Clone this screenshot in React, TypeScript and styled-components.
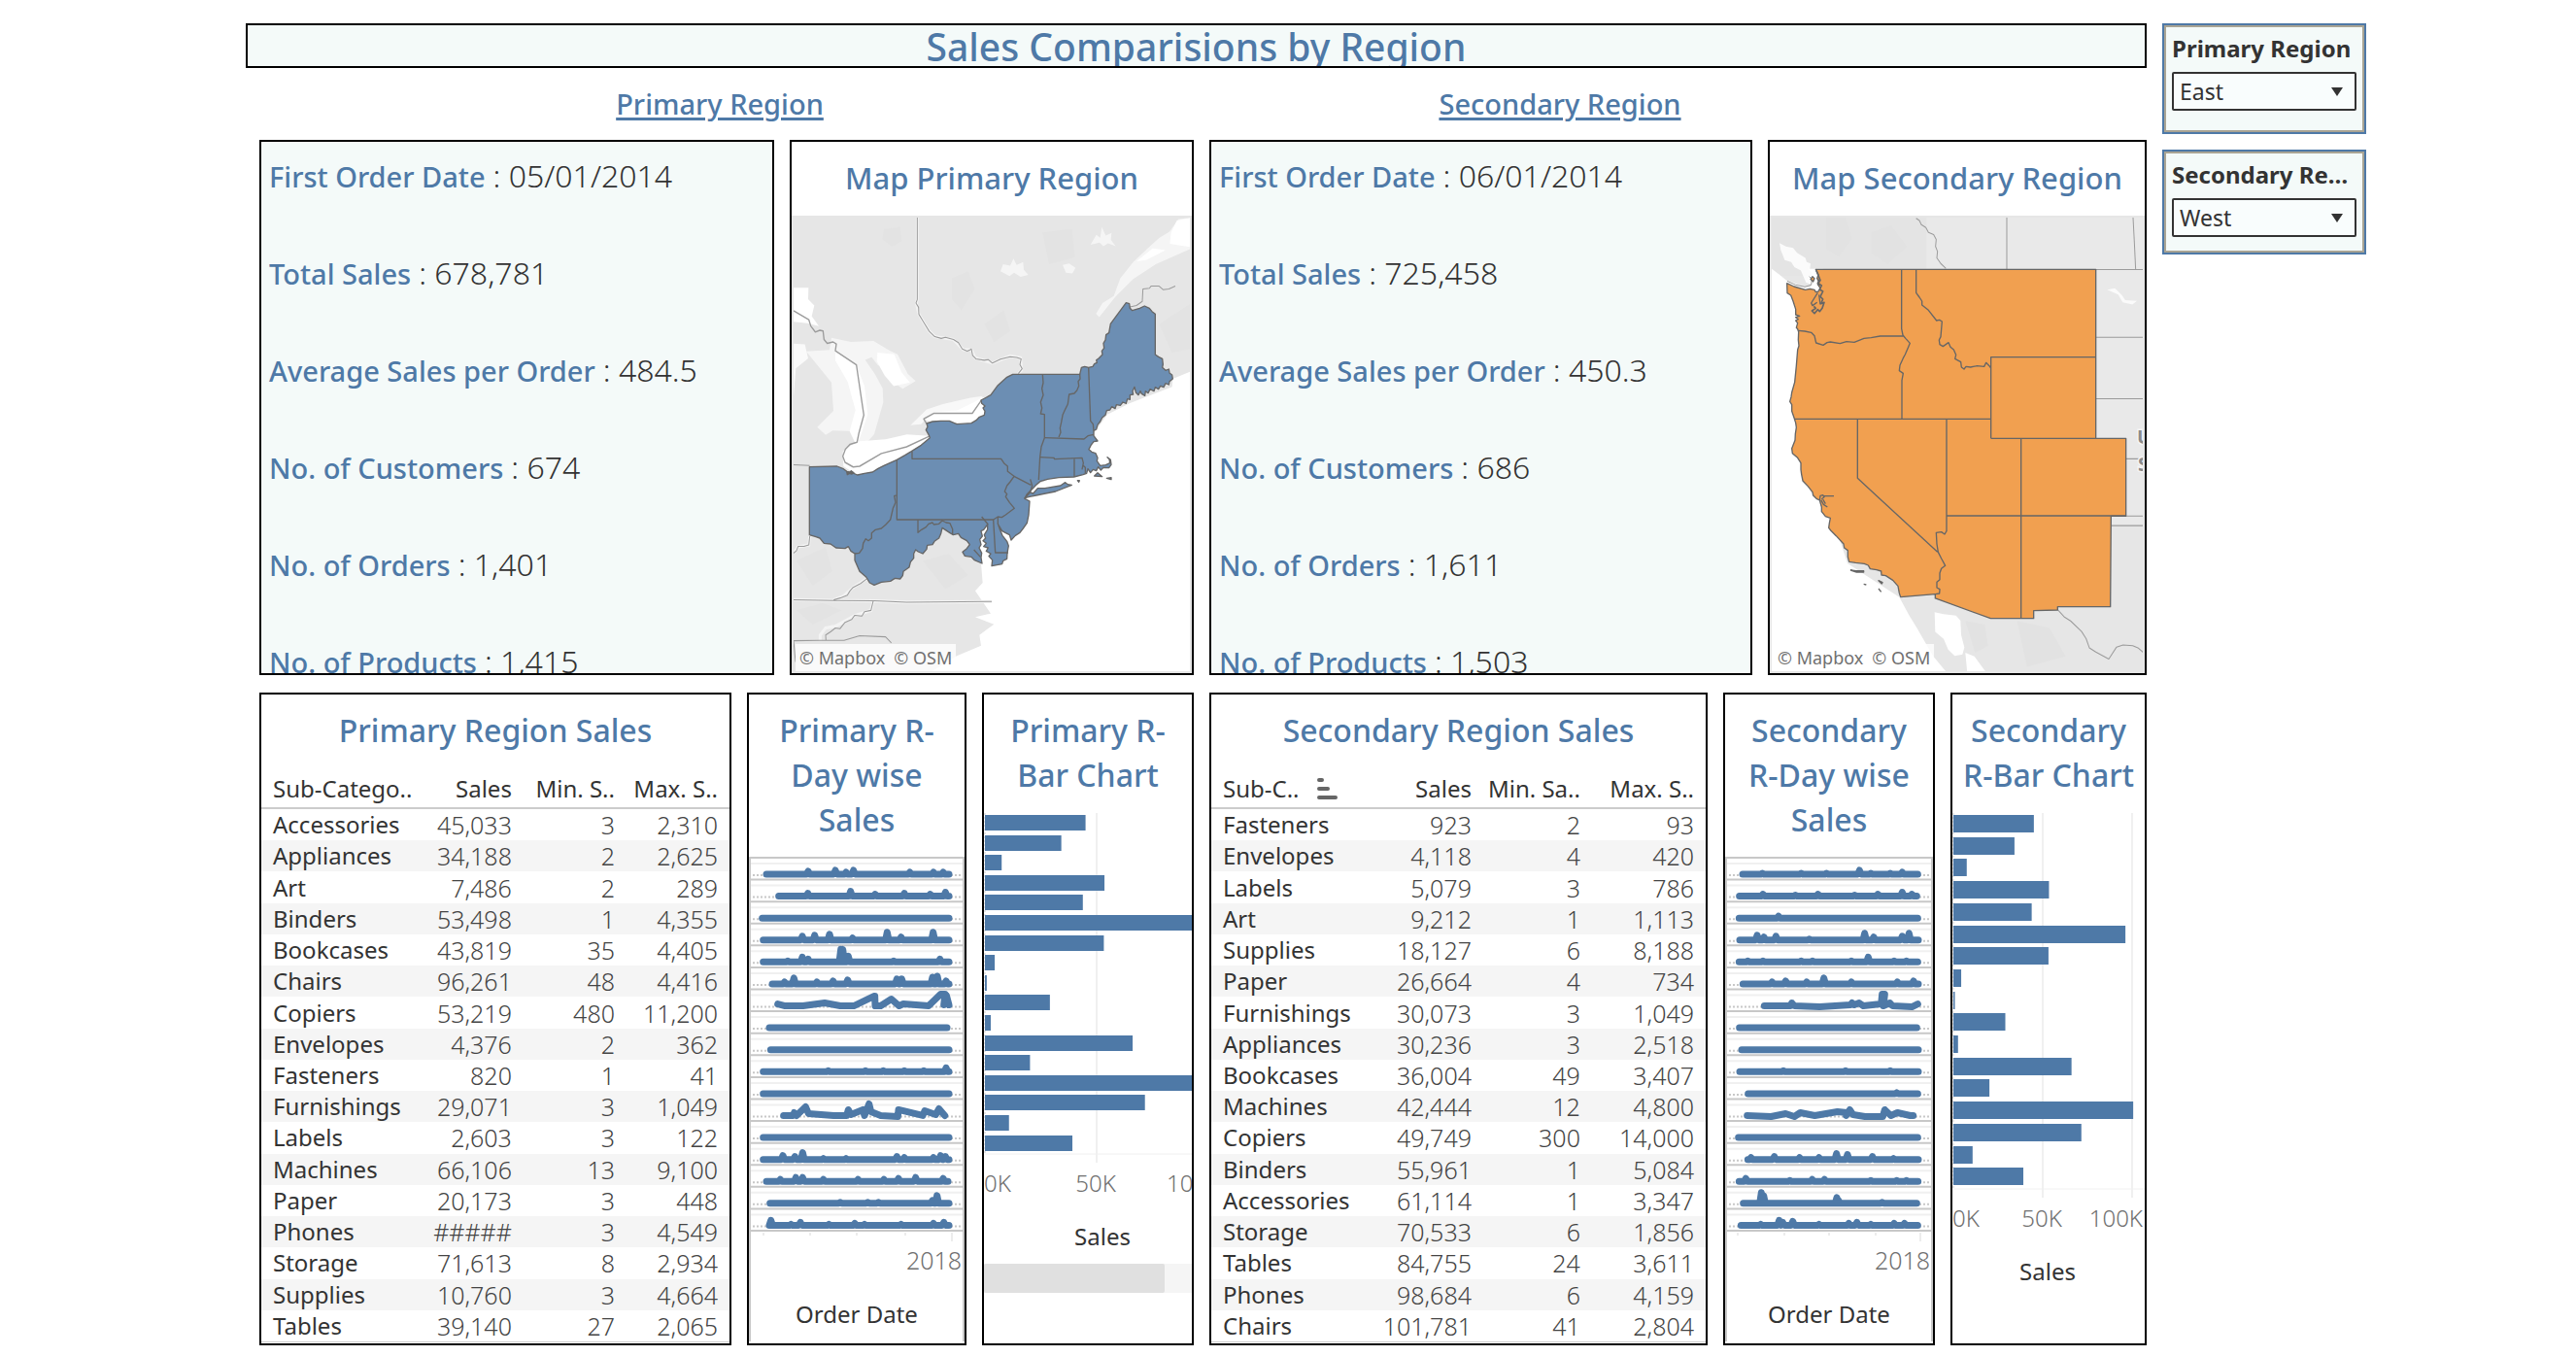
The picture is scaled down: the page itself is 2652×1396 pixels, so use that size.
import React from "react";
import styled, { createGlobalStyle } from "styled-components";

const BLUE = "#4e79a7";
const INK = "#333333";
const TINT = "#f4faf9";

const GlobalStyle = createGlobalStyle`
  *, *::before, *::after { box-sizing: border-box; }
  body {
    margin: 0;
    background: #ffffff;
    color: ${INK};
    font-family: "Noto Sans", "Open Sans", sans-serif;
  }
  h1, h2, h3, p, dl, dt, dd { margin: 0; font-weight: 400; }
`;

const Page = styled.div`
  display: grid;
  grid-template-columns: minmax(0, 1fr) 210px;
  column-gap: 16px;
  padding: 24px 216px 11px 253px;
`;

const Main = styled.main`
  min-width: 0;
`;

const Title = styled.h1`
  height: 46px;
  overflow: hidden;
  border: 2px solid #000000;
  background: ${TINT};
  color: ${BLUE};
  font-size: 39px;
  font-weight: 500;
  line-height: 44px;
  text-align: center;
  white-space: nowrap;
`;

const RegionHeadings = styled.div`
  display: grid;
  grid-template-columns: 976fr 754fr 227fr;
  align-items: center;
  height: 74px;
`;

const RegionHeading = styled.h2`
  color: ${BLUE};
  font-size: 29px;
  font-weight: 500;
  line-height: 40px;
  text-align: center;
  text-decoration: underline;
  text-decoration-thickness: 3px;
  text-underline-offset: 3px;
`;

const Row = styled.div<{ $columns: string; $height: number }>`
  display: grid;
  grid-template-columns: ${(p) => p.$columns};
  column-gap: 16px;
  height: ${(p) => p.$height}px;
  margin-left: 14px;
  & + & { margin-top: 18px; }
`;

const Panel = styled.section<{ $tint?: boolean }>`
  display: flex;
  flex-direction: column;
  min-width: 0;
  overflow: hidden;
  border: 2px solid #000000;
  background: ${(p) => (p.$tint ? TINT : "#ffffff")};
`;

const PanelTitle = styled.h3<{ $map?: boolean }>`
  flex: none;
  padding: ${(p) => (p.$map ? "14px 0 16px" : "14px 10px 0")};
  color: ${BLUE};
  font-size: ${(p) => (p.$map ? 31 : 32)}px;
  font-weight: 500;
  line-height: 46px;
  text-align: center;
`;

const KpiList = styled.dl`
  display: flex;
  flex-direction: column;
  gap: 60px;
  padding: 15px 8px 0;
  line-height: 40px;
  white-space: nowrap;
`;

const Kpi = styled.div`
  display: flex;
  align-items: baseline;
  gap: 8px;
  height: 40px;
`;

const KpiName = styled.dt`
  color: ${BLUE};
  font-size: 29px;
  font-weight: 500;
`;

const KpiValue = styled.dd`
  font-size: 32px;
  font-weight: 300;
`;

const MapBody = styled.div`
  position: relative;
  flex: 1;
  min-height: 0;
  border: 2px solid #e6e6e6;
  background: #e6e6e6;
`;

const MapSvg = styled.svg`
  display: block;
  width: 100%;
  height: 100%;
`;

const Attribution = styled.div`
  position: absolute;
  left: 2px;
  bottom: 0;
  display: flex;
  gap: 9px;
  padding: 0 4px;
  background: rgba(255, 255, 255, 0.8);
  color: #707070;
  font-size: 18px;
  line-height: 28px;
`;

const SalesTable = styled.table`
  flex: 1;
  width: 100%;
  margin-bottom: 1px;
  border-collapse: collapse;
  table-layout: fixed;
  font-size: 24px;
  line-height: 32px;
  white-space: nowrap;
  border-bottom: 1px solid #cccccc;
`;

const HeadCell = styled.th<{ $width: string; $left?: boolean }>`
  width: ${(p) => p.$width};
  height: 57px;
  padding: ${(p) => (p.$left ? "21px 0 0 12px" : "21px 12px 0 0")};
  border-bottom: 2px solid #cccccc;
  font-weight: 400;
  text-align: ${(p) => (p.$left ? "left" : "right")};
  vertical-align: top;
`;

const SortHead = styled.span`
  display: flex;
  align-items: center;
  gap: 18px;
`;

const BodyRow = styled.tr`
  &:nth-child(even) { background: #f5f5f5; }
`;

const NameCell = styled.th`
  padding: 0 0 0 12px;
  font-weight: 400;
  text-align: left;
`;

const NumCell = styled.td`
  padding: 0 12px 0 0;
  color: #444444;
  font-size: 25px;
  font-weight: 300;
  text-align: right;
`;

const DayBody = styled.div`
  display: flex;
  flex: 1;
  flex-direction: column;
  margin: 15px 0 2px;
  border: solid #c8c8c8;
  border-width: 2px 2px 0;
`;

const ChartSvg = styled.svg`
  display: block;
  flex: none;
  width: 100%;
`;

const DayYear = styled.div`
  padding-right: 1px;
  color: #707070;
  font-size: 25px;
  font-weight: 300;
  line-height: 38px;
  text-align: right;
`;

const DayAxis = styled.div`
  padding-top: 20px;
  font-size: 24px;
  line-height: 34px;
  text-align: center;
`;

const BarBody = styled.div`
  padding-top: 16px;
`;

const ScrollTrack = styled.div`
  height: 30px;
  background: #f5f5f5;
`;

const ScrollThumb = styled.div`
  width: 87%;
  height: 100%;
  border-radius: 2px;
  background: #e0e0e0;
`;

const Sidebar = styled.aside`
  display: flex;
  flex-direction: column;
  gap: 16px;
`;

const Filter = styled.div<{ $bottom: number }>`
  padding: 6px 6px ${(p) => p.$bottom}px;
  border: 2px solid ${BLUE};
  background: ${TINT};
  box-shadow: inset 0 0 0 2px #a9a494;
`;

const FilterLabel = styled.label`
  display: block;
  overflow: hidden;
  margin: 0 2px 6px;
  font-size: 24px;
  font-weight: 700;
  line-height: 36px;
  text-overflow: ellipsis;
  white-space: nowrap;
`;

const SelectWrap = styled.div`
  position: relative;
  margin: 0 2px;
`;

const Select = styled.select`
  display: block;
  width: 100%;
  height: 40px;
  padding: 0 6px;
  border: 2px solid ${INK};
  border-radius: 2px;
  appearance: none;
  background: #f9fdfd;
  color: ${INK};
  font-family: inherit;
  font-size: 23px;
`;

const Caret = styled.svg`
  position: absolute;
  top: 16px;
  right: 14px;
  pointer-events: none;
`;

type SalesRow = [string, string, string, string];

const primarySales: SalesRow[] = [
  ["Accessories", "45,033", "3", "2,310"],
  ["Appliances", "34,188", "2", "2,625"],
  ["Art", "7,486", "2", "289"],
  ["Binders", "53,498", "1", "4,355"],
  ["Bookcases", "43,819", "35", "4,405"],
  ["Chairs", "96,261", "48", "4,416"],
  ["Copiers", "53,219", "480", "11,200"],
  ["Envelopes", "4,376", "2", "362"],
  ["Fasteners", "820", "1", "41"],
  ["Furnishings", "29,071", "3", "1,049"],
  ["Labels", "2,603", "3", "122"],
  ["Machines", "66,106", "13", "9,100"],
  ["Paper", "20,173", "3", "448"],
  ["Phones", "#####", "3", "4,549"],
  ["Storage", "71,613", "8", "2,934"],
  ["Supplies", "10,760", "3", "4,664"],
  ["Tables", "39,140", "27", "2,065"],
];

const secondarySales: SalesRow[] = [
  ["Fasteners", "923", "2", "93"],
  ["Envelopes", "4,118", "4", "420"],
  ["Labels", "5,079", "3", "786"],
  ["Art", "9,212", "1", "1,113"],
  ["Supplies", "18,127", "6", "8,188"],
  ["Paper", "26,664", "4", "734"],
  ["Furnishings", "30,073", "3", "1,049"],
  ["Appliances", "30,236", "3", "2,518"],
  ["Bookcases", "36,004", "49", "3,407"],
  ["Machines", "42,444", "12", "4,800"],
  ["Copiers", "49,749", "300", "14,000"],
  ["Binders", "55,961", "1", "5,084"],
  ["Accessories", "61,114", "1", "3,347"],
  ["Storage", "70,533", "6", "1,856"],
  ["Tables", "84,755", "24", "3,611"],
  ["Phones", "98,684", "6", "4,159"],
  ["Chairs", "101,781", "41", "2,804"],
];

const barValues = [
  45033, 34188, 7486, 53498, 43819, 96261, 53219, 4376, 820, 29071, 2603, 66106,
  20173, 100615, 71613, 10760, 39140,
];

/* A daily series: either a flat run with peaks, or every vertex in turn.
   x is in thirds of a pixel, heights are in pixels above the zero line. */
type Series = { from?: number; to?: number; peaks?: number[][]; line?: number[][] };

const primaryDays: Series[] = [
  { from: 54, to: 618, peaks: [[183, 3], [267, 4], [300, 2], [323, 4], [497, 2], [570, 2], [600, 2]] },
  { from: 92, to: 618, peaks: [[182, 3], [314, 5], [390, 2], [480, 3], [560, 2], [607, 4]] },
  { from: 41, to: 618 },
  { from: 44, to: 618, peaks: [[165, 4], [203, 5], [249, 6], [320, 2], [427, 8], [470, 3], [569, 8]] },
  { from: 44, to: 618, peaks: [[120, 1], [165, 5], [183, 3], [284, 13], [290, 13], [307, 6], [447, 1], [590, 3]] },
  { from: 72, to: 618, peaks: [[110, 2], [139, 6], [210, 2], [260, 3], [305, 4], [457, 5], [472, 5], [567, 7], [582, 8], [609, 3]] },
  { line: [[89, 2], [112, 0], [167, 0], [234, 3], [282, 0], [324, 0], [386, 10], [389, 10], [390, 0], [407, 0], [440, 7], [464, 0], [477, 2], [555, 0], [592, 12], [606, 12], [602, 1], [610, 11], [618, 1]] },
  { from: 63, to: 612 },
  { from: 67, to: 618 },
  { from: 44, to: 618, peaks: [[245, 1], [360, 1], [415, 1], [480, 1], [540, 1], [609, 4]] },
  { from: 44, to: 618 },
  { line: [[107, 0], [137, 0], [140, 3], [147, 0], [175, 9], [184, 2], [262, 0], [302, 0], [307, 6], [315, 1], [352, 6], [357, 0], [371, 12], [377, 4], [407, 0], [460, -1], [462, 6], [537, 0], [543, 5], [577, 1], [587, 7], [605, 0]] },
  { from: 44, to: 618 },
  { from: 44, to: 618, peaks: [[105, 4], [142, 3], [166, 7], [230, 1], [300, 1], [457, 3], [480, 2], [570, 2], [592, 4], [607, 3]] },
  { from: 54, to: 615, peaks: [[97, 2], [145, 4], [166, 4], [230, 2], [337, 2], [417, 2], [462, 3], [515, 4], [600, 3]] },
  { from: 65, to: 618, peaks: [[282, 1], [367, 1], [400, 1], [567, 3], [581, 8]] },
  { from: 67, to: 618, peaks: [[68, 5], [130, 1], [159, 3], [247, 1], [327, 2], [357, 1], [470, 1], [570, 2], [602, 3]] },
];

const secondaryDays: Series[] = [
  { from: 54, to: 595, peaks: [[115, 1], [235, 1], [313, 1], [415, 4], [450, 1], [510, 1], [547, 2]] },
  { from: 44, to: 592, peaks: [[117, 2], [217, 1], [287, 2], [400, 1], [472, 2], [547, 4], [577, 2]] },
  { from: 43, to: 595, peaks: [[165, 2]] },
  { from: 45, to: 597, peaks: [[99, 5], [120, 3], [157, 4], [260, 1], [431, 7], [459, 3], [547, 4], [568, 7]] },
  { from: 43, to: 595, peaks: [[70, 1], [117, 1], [235, 1], [270, 1], [390, 1], [442, 5], [522, 1], [560, 1]] },
  { from: 55, to: 597, peaks: [[145, 2], [187, 3], [252, 2], [305, 6], [390, 2], [532, 2], [582, 3]] },
  { line: [[121, 0], [202, 0], [206, 3], [214, 0], [292, -1], [387, 1], [392, 3], [399, 1], [414, 3], [427, 0], [482, 2], [485, 12], [493, 12], [489, 0], [509, 3], [517, 0], [577, -1], [595, 2]] },
  { from: 44, to: 592 },
  { from: 51, to: 597 },
  { from: 45, to: 597, peaks: [[180, 1], [372, 1], [510, 1]] },
  { from: 71, to: 595, peaks: [[530, 1]] },
  { line: [[68, 0], [142, -1], [187, 2], [214, -1], [232, 3], [277, 0], [312, 2], [347, 4], [377, 3], [374, 0], [385, 6], [395, 1], [432, -1], [487, -1], [493, 6], [512, 0], [532, 3], [572, 0], [581, 0]] },
  { from: 41, to: 595 },
  { from: 70, to: 597, peaks: [[80, 2], [152, 3], [230, 2], [290, 2], [344, 6], [378, 5], [455, 3], [520, 1]] },
  { from: 43, to: 596, peaks: [[64, 3], [200, 1], [269, 2], [307, 2], [450, 1], [530, 1], [560, 1]] },
  { from: 56, to: 592, peaks: [[112, 11], [119, 8], [345, 6], [350, 3], [485, 1]] },
  { from: 49, to: 595, peaks: [[110, 1], [167, 5], [178, 3], [209, 4], [290, 1], [382, 2], [407, 3], [450, 1], [522, 2], [554, 2]] },
];

const DAY_ROW = 384 / 17;

function seriesPath(s: Series, zero: number): string {
  let pts: number[][] = [];
  if (s.line) {
    pts = s.line;
  } else {
    pts.push([s.from!, 0]);
    (s.peaks ?? []).forEach(([x, h]) => {
      pts.push([x - 5, 0], [x, h], [x + 5, 0]);
    });
    pts.push([s.to!, 0]);
  }
  return "M" + pts.map(([x, h]) => `${(x - 6) / 3} ${zero - h}`).join("L");
}

function DayChart({ days, width, ticks }: { days: Series[]; width: number; ticks: number[] }) {
  return (
    <ChartSvg viewBox={`0 0 ${width} 394`} role="img" aria-label="Sales per day by sub-category">
      {days.map((s, i) => {
        const top = i * DAY_ROW;
        return (
          <g key={i}>
            <path d={`M0 ${top + 5}H${width}`} stroke="#f0f0f0" strokeWidth={2} />
            <path d={`M2 ${top + 17}H${width}`} stroke="#c8c8c8" strokeWidth={2} strokeDasharray="2 2" />
            <path d={seriesPath(s, top + 16)} fill="none" stroke={BLUE} strokeWidth={7} strokeLinecap="round" strokeLinejoin="round" />
            <path d={`M0 ${top + DAY_ROW - 1}H${width}`} stroke="#c8c8c8" strokeWidth={2} />
          </g>
        );
      })}
      {ticks.map((x, i) => (
        <path key={x} d={`M${x} 385v${i === ticks.length - 1 ? 9 : 3}`} stroke="#ececec" strokeWidth={2} />
      ))}
    </ChartSvg>
  );
}

type BarChartProps = {
  width: number;
  step: number;
  pitch: number;
  bar: number;
  lastX: number;
  lastAnchor: "start" | "end";
  titleX: number;
};

function BarChart({ width, step, pitch, bar, lastX, lastAnchor, titleX }: BarChartProps) {
  const bottom = Math.round(pitch * 17);
  return (
    <ChartSvg viewBox={`0 0 ${width} ${bottom + 114}`} role="img" aria-label="Sales by sub-category">
      {[1, 2].map((n) => (
        <path key={n} d={`M${1 + n * step} 0V${bottom + 10}`} stroke="#f0f0f0" strokeWidth={2} />
      ))}
      <path d={`M1 0V${bottom}`} stroke="#cccccc" strokeDasharray="2 2" />
      <path d={`M1 ${bottom + 1}H${width}`} stroke="#f0f0f0" strokeWidth={1} />
      {barValues.map((v, i) => (
        <rect key={i} x={1} y={Math.round(2 + i * pitch)} width={(v / 50000) * step} height={bar} fill={BLUE} />
      ))}
      <g fill="#707070" fontSize={24} fontWeight={300}>
        <text x={0} y={bottom + 40}>0K</text>
        <text x={step} y={bottom + 40} textAnchor="middle">50K</text>
        <text x={lastX} y={bottom + 40} textAnchor={lastAnchor}>100K</text>
      </g>
      <text x={titleX} y={bottom + 95} fill={INK} fontSize={24} textAnchor="middle">Sales</text>
    </ChartSvg>
  );
}

const BORDER = "#9b9b9b";

function EastMap() {
  return (
    <MapSvg viewBox="0 0 408 467" preserveAspectRatio="xMidYMid slice" role="img" aria-label="Map of the East region">
      <g transform="scale(0.33333 0.36364) translate(-51 -258)">
        <g fill="#e3e3e3">
          <path d="M330 290l50-5 5 40-30 15-30-20zM540 430l50-20 20 50-40 60-30-30zM820 300l90-10 10 80-80 20zM640 560l60-40 20 60-50 30zM1180 560l100-60v130l-60 10zM60 1230l90-40 20 70-60 40zM450 1230l80-20 60 60-70 40zM60 1370l80-20 60 20-90 40z" />
        </g>
        <g fill="#ffffff" fillOpacity={0.6}>
          <path d="M968 335l18-28 12 8 5-30 12 24 18-8-2 20 15 18-24-8-14 8-12-10zM690 410l8-20 22 4 10-20 10 18 20-8 2 22 14 14-24 6-20-12-14 10zM882 392l20-4 20 12-10 16-20-2z" />
          <path d="M1281 258l-41 4-28 36-32 18-34 28-46 40-40 46-20 50-35 20-20 30 10 10 50-58 55-50 70-42 111-45z" />
        </g>
        <g fill="#ffffff">
          <path d="M1281 258l-46 8-18 34-4 32 68 10zM1160 345l40 5-60 28-30 4z" />
          <path d="M51 457h46l-1 32 19 18-8 30 22 28-35-8-43-4z" />
          <path d="M51 615l35 2 10 40-38 28-7 80z" fillOpacity={0.8} />
          <path d="M90 637l72-4 6-35 60 12 70-3 50 28 24 10 32 56 24 20-40 22-34-22-12-40-30-4-20-24-20 8 30 40 24 40 2 40-28 90-36 38-26-46-66-2-22 12-26-22 50-46-6-80z" fillOpacity={0.6} />
          <path d="M180 637l65 38 25 60 10 80-18 50-16 40-22-42 18-60-24-80-38-60zM310 640l52 5 22 50 26 30-50 10-28-30-24-40z" />
          <path d="M203 920l42-28 90-6 66-14 69 4 2 8-55 38-47 22-48 18-26 17-50 8-41-25z" />
          <path d="M452 828l34-20 70-4 50-22 26-14 30-5 8 59-30 18-55 3-65-8-28 10z" />
          <path d="M412 846l50-45 50-15 85-18 38-5-20 40-140 10-30 30z" fillOpacity={0.7} />
        </g>
      </g>
      <g transform="scale(0.33333) translate(9 618)">
        <path d="M1260 -160L1162 -120 1160 -95 1030 -45 960 -10 910 60 890 100 890 165 780 190 738 210 700 250 620 325 575 340 560 400 570 450 575 510 552 535 600 605 552 616 610 638 565 671 570 704 495 736 410 789H1260z" fill="#ffffff" />
      </g>
      <g transform="scale(0.33333 0.36364) translate(-51 -258)">
        <g fill="none" stroke="#f3f3f3" strokeWidth={9}>
          <path d="M433 258V490l-3 10 8 32 32 48 17 15 58 8 30 29 25 1 12 22 53 15 55-20 32 5 3 35-10 10M101 1160l-3 25-33 5-14 18M278 1280l-43 25-30 25-30 10M51 1340l124 2 125 1 100 4 263-2M297 1343l-7 27-50 15-60 30-30 5-17 20v15" />
        </g>
        <g fill="none" stroke={BORDER} strokeWidth={3} strokeLinejoin="round">
          <path d="M433 258V490L429 500 437 512 438 532 450 550 470 580 487 595 507 600 520 597 545 603 560 612 572 630 587 636 595 633 600 630 604 648 614 658 640 662 652 660 665 670 690 659 720 652 740 654 754 658 750 674 757 686 745 700" />
          <path d="M51 522l47 25 6 18 14 17 14-5 10 2 3 24 10 11 18-4 10 6-3 19 65 40 23 142-15 50-6 27-22 6-14 14-8 20 7 17 25 13 20-2 67-36 78-19 70-30" strokeWidth={4} />
          <path d="M462 842l-9-14 32-16h118l29-38" strokeWidth={4} />
          <path d="M1090 511l20-4 18-12 2-35 20-2 5-6h25l12 10 18-2 20-8" />
          <path d="M51 958l50 2M101 1160l-3 25-15 4-18 0-5 12-9 7M278 1280l-20 14-23 11-10 10-8 12-22 8-20 5M51 1340l124 2 125 1 100 4 263-2M297 1343l-7 27-20 4-8 12-22-2-10 12-20 8-16 18-14-2-14 10-16 10 1 15M51 1456l80-1h76l48-13 80 3 18 17M51 1456l6 60" />
        </g>
      </g>
      <g transform="scale(0.33333) translate(9 618)" fill="#6c8eb3" stroke="#666666" strokeWidth={4} strokeLinejoin="round">
        <path d="M40 152L125 150 145 158 155 166 172 170 188 177 210 172 235 168 252 157 270 148 310 130 335 116 355 104 385 85 412 62 408 52 400 38 405 28 402 18 420 12 445 10 472 10 495 20 540 17 555 8 565 -2 580 -8 582 -20 576 -30 582 -36 572 -44 570 -54 600 -70 622 -100 650 -125 668 -134 875 -134 880 -155 890 -158 902 -155 915 -158 920 -166 928 -170 926 -178 934 -184 945 -195 943 -206 950 -215 948 -230 954 -240 956 -256 965 -262 970 -290 1018 -355 1028 -352 1030 -338 1037 -331 1060 -338 1075 -345 1090 -338 1098 -328 1108 -320 1108 -195 1118 -188 1130 -182 1132 -165 1130 -155 1140 -146 1150 -150 1152 -138 1160 -132 1162 -120 1152 -112 1150 -102 1140 -106 1134 -94 1124 -98 1118 -88 1108 -94 1104 -82 1092 -88 1086 -76 1078 -82 1076 -68 1066 -74 1062 -82 1056 -70 1048 -78 1044 -95 1038 -82 1040 -72 1030 -70 1030 -56 1022 -58 1018 -44 1008 -48 1000 -38 988 -40 984 -28 974 -34 968 -24 958 -22 954 -8 944 0 938 12 930 22 926 36 918 40 918 56 930 72 918 74 910 84 903 98 912 106 924 110 930 124 928 134 938 148 955 146 968 140 966 128 960 122 970 130 972 145 965 155 948 154 940 162 932 152 926 164 916 160 908 170 900 158 896 172 885 176 857 183 810 185 775 190 752 197 740 208 733 215 712 236 705 250 720 258 717 300 712 325 700 342 690 355 676 364 663 378 658 362 646 356 635 350 622 328 628 345 636 364 650 382 655 396 651 418 650 436 638 442 635 452 603 458 605 440 594 428 600 420 586 412 592 402 578 398 586 388 576 380 584 372 580 362 590 345 590 330 578 346 570 350 574 366 566 376 570 392 564 402 572 418 570 432 573 450 550 440 540 430 520 427 513 415 526 404 535 392 526 380 508 370 500 358 484 362 474 356 450 340 446 358 440 372 426 382 420 392 404 394 402 406 390 420 376 414 368 408 362 420 362 434 352 446 348 462 330 475 328 488 320 498 304 496 290 505 262 508 240 517 226 510 215 492 195 475 180 440 180 420 168 412 160 398 150 404 138 403 122 402 105 390 85 388 72 372 60 368 40 362z" />
        <path d="M705 248l14-18 12 4 14-16 22 0 48-8 15-10 8 6 12 2-50 20-60 12-20 4zM920 180l10-10 14 12zM958 187l14-2v6zM868 194h6l-2 5z" />
        <path d="M155 166l8 4 6-6 8 6-6 4-8-2-6 4z" fill="#666666" />
        <g fill="none">
          <path d="M310 130V315H608L622 306 634 308 646 300 673 280 658 262 646 244 650 236 643 228 650 210 660 198 672 181 652 166 652 150 642 142 632 127H357V104" />
          <path d="M672 181L724 208M722 190L728 210 722 230 708 246M748 192L752 122 756 90 766 62 766 -10 754 -12 758 -30 754 -48 762 -70 758 -90 762 -108 760 -134" />
          <path d="M875 -134L876 -120 870 -112 872 -98 866 -84 858 -75 842 -72 838 -42 830 -26 822 -8 818 14 814 32 816 46 810 60M902 -155L908 10 916 20 918 40" />
          <path d="M766 62L888 66 900 56 918 52M752 122L795 124 797 128 882 124 886 140 882 160M858 126V183M884 146l8 8 0 18" />
          <path d="M308 240L302 242 306 262 298 280 290 315 276 330 262 342 244 346 232 356 232 372 222 380 214 374 206 388 204 404 194 418 180 420M375 315V355L386 346 400 338 408 328 420 324 424 330 440 328 450 318 462 324 474 326 482 344 482 360M608 315L614 417H654M572 306L592 330M548 408L568 430M622 308V328" />
        </g>
      </g>
    </MapSvg>
  );
}

function WestMap() {
  return (
    <MapSvg viewBox="0 0 382 467" preserveAspectRatio="xMidYMid slice" role="img" aria-label="Map of the West region">
      <g transform="scale(0.33333 0.36364) translate(-42 -258)">
        <path d="M36 253h500v170h-500z" fill="#e4e4e4" />
        <path d="M520 253h674v1298h-674z" fill="#e9e9e9" />
        <path d="M430 1320h760v240H430zM1090 1130h104v300h-104z" fill="#e6e6e6" />
        <path d="M210 258l60 0 20 60-40 50-40-20zM350 300l60-20 50 60-60 50-50-30zM800 1400l100 20 50 80-120 30zM640 1400l60 10 10 60-40 20z" fill="#e2e2e2" />
        <path d="M66 330l20 10 22 4 12 14 26 14 4 12 12 4-2 16 16 4-8 40-20-6-16-34-20-10-10-14-20-6-12-28z" fill="#ffffff" fillOpacity={0.85} />
        <path d="M545 1375l28 6 38 4 14 14 2 40 10 36-6 20-24 4-20-18-14-30-26-20zM640 1490l28 10 38 48h-60z" fill="#ffffff" />
        <path d="M1078 462l24-4 22 20 10 14 36 2-14 10-30-6-14-22z" fill="#ffffff" fillOpacity={0.8} />
        <g fill="none" stroke={BORDER} strokeWidth={3} strokeLinejoin="round">
          <path d="M488 260l10 6 6 12 14 8 8 14 16 6 8 14-2 20 6 14-2 18 12 16 16 14M768 258v147M1158 258l4 70 4 77M1043 405h151M1043 597h151M1043 771h151M1136 941h58M1136 1103h58M1090 1130h104M925 1368l20 20 20 12 34 30 14 20 10 26 20 12 40 20 24-34 20-6 30 2 16 6 20 16" />
        </g>
      </g>
      <g transform="scale(0.33333) translate(-6 78)">
        <path d="M6 80L30 98 52 116 75 124 100 135 124 138 134 120 118 110 132 96 118 80H165V760L240 990 400 1094 430 1150 454 1189 504 1276 549 1330H6z" fill="#ffffff" />
        <path d="M54 118L80 130 108 136 128 130 130 112 122 104" fill="none" stroke={BORDER} strokeWidth={3} />
        <g fill="#f1a050" stroke="#666666" strokeWidth={4} strokeLinejoin="round">
          <path d="M142 82H1007V604H1100V844H1054L1052 1124H889V1134L815 1136V1160H682L511 1098V1085L404 1094 400 1082 396 1060 380 1042 358 1028 345 1026 344 1014 330 1010 310 1007 304 996 292 991 265 988 245 985 241 970 241 950 230 942 228 930 205 905 188 888 182 880 184 866 187 850 172 845 160 830 160 816 154 795 144 790 134 780 132 770 118 752 102 735 98 715 96 700 96 680 86 664 70 650 68 635 78 610 79 590 82 570 80 556 75 540 68 520 68 500 62 490 66 476 68 462 77 430 82 380 86 330 90 318 88 300 89 275 86 266 82 262 86 248 80 240 88 236 80 230 92 226 80 222 80 205 72 180 65 162 54 155 53 125 75 135 110 145 124 142 138 145 142 152 150 150 156 140 148 128 154 118 146 110 150 98z" />
          <path d="M126 112l6-8 6 6-4 10zM250 1011l16 2 24 0v4l-22 0zM290 1054l8 2M336 1043l12 6-2 4zM336 1068l8 10" />
          <path d="M144 86l12 30-8 8 12 8-6 12 10 6-8 16 8 8-6 14 10-4-6 18-8 10-6-6-10 12-8-8 12-8-6-6" fill="none" strokeWidth={5} />
          <path d="M148 154l-20 32 4 8 14-10M148 112l6 20M152 160l4 30" fill="none" />
          <g fill="none">
            <path d="M88 271l20 2 20 4 10 10 5 22 22 7 12-8 10-2 30 5 20-6 24 2 30-12 22-2 28-5H413" />
            <path d="M407 82V265L411 285 420 296 433 310 428 322 418 345 412 356 402 378 400 395 412 403 408 425V544" />
            <path d="M452 82V154L462 168 470 180 470 192 490 208 515 240 524 238 532 243 528 290 523 300 525 314 535 320 552 308 558 322 568 330 575 346 572 358 590 368 592 384 600 390 606 382 620 384 640 380 662 382 668 370 678 380 683 387M76 544H683M683 604V353H1007M683 604H776M1007 604H776V1160M271 544V727L518 955M546 544V890L540 900 530 893 514 895 516 930 520 955 530 975 542 997 530 1006 525 1020 525 1040 516 1048 516 1065 525 1070 524 1083 511 1085M546 843H1100" />
            <path d="M154 795l2-14 8-2 4 6-8 6M166 782h32M158 794l8 14 12 8M164 792l8 14" />
          </g>
        </g>
      </g>
      <g fill="#8a8a8a" stroke="#f5f5f5" strokeWidth={3} paintOrder="stroke" fontSize={20} fontWeight={700}>
        <text x={376} y={233}>U</text>
        <text x={377} y={261}>S</text>
      </g>
    </MapSvg>
  );
}

type SalesPanelProps = {
  title: string;
  rows: SalesRow[];
  heads: [string, string, string, string];
  widths: [string, string, string, string];
  sorted?: boolean;
};

function SalesPanel({ title, rows, heads, widths, sorted }: SalesPanelProps) {
  return (
    <Panel>
      <PanelTitle>{title}</PanelTitle>
      <SalesTable>
        <thead>
          <tr>
            {heads.map((h, i) => (
              <HeadCell key={h} scope="col" $width={widths[i]} $left={i === 0}>
                {i === 0 && sorted ? (
                  <SortHead>
                    {h}
                    <svg width="22" height="22" viewBox="0 0 22 22" stroke="#666666" strokeWidth={4} strokeLinecap="round" aria-hidden="true">
                      <path d="M2 2h3M2 11h9M2 20h17" />
                    </svg>
                  </SortHead>
                ) : (
                  h
                )}
              </HeadCell>
            ))}
          </tr>
        </thead>
        <tbody>
          {rows.map(([name, ...nums]) => (
            <BodyRow key={name}>
              <NameCell scope="row">{name}</NameCell>
              {nums.map((n, i) => (
                <NumCell key={i}>{n}</NumCell>
              ))}
            </BodyRow>
          ))}
        </tbody>
      </SalesTable>
    </Panel>
  );
}

function KpiPanel({ items }: { items: [string, string][] }) {
  return (
    <Panel $tint>
      <KpiList>
        {items.map(([name, value]) => (
          <Kpi key={name}>
            <KpiName>{name}</KpiName>
            <KpiValue>: {value}</KpiValue>
          </Kpi>
        ))}
      </KpiList>
    </Panel>
  );
}

function MapPanel({ title, children }: { title: string; children: React.ReactNode }) {
  return (
    <Panel>
      <PanelTitle $map>{title}</PanelTitle>
      <MapBody>
        {children}
        <Attribution>
          <span>© Mapbox</span>
          <span>© OSM</span>
        </Attribution>
      </MapBody>
    </Panel>
  );
}

function DayPanel({ title, ...chart }: { title: string; days: Series[]; width: number; ticks: number[] }) {
  return (
    <Panel>
      <PanelTitle>{title}</PanelTitle>
      <DayBody>
        <DayChart {...chart} />
        <DayYear>2018</DayYear>
        <DayAxis>Order Date</DayAxis>
      </DayBody>
    </Panel>
  );
}

function FilterBox({ id, label, value, options, bottom }: { id: string; label: string; value: string; options: string[]; bottom: number }) {
  return (
    <Filter $bottom={bottom}>
      <FilterLabel htmlFor={id}>{label}</FilterLabel>
      <SelectWrap>
        <Select id={id} defaultValue={value}>
          {options.map((o) => (
            <option key={o}>{o}</option>
          ))}
        </Select>
        <Caret width="12" height="9" viewBox="0 0 12 9" aria-hidden="true">
          <path d="M0 0h12L6 9z" fill={INK} />
        </Caret>
      </SelectWrap>
    </Filter>
  );
}

const regions = ["Central", "East", "South", "West"];

export default function App() {
  return (
    <>
      <GlobalStyle />
      <Page>
        <Main>
          <Title>Sales Comparisions by Region</Title>
          <RegionHeadings>
            <RegionHeading>Primary Region</RegionHeading>
            <RegionHeading>Secondary Region</RegionHeading>
          </RegionHeadings>
          <Row $columns="530fr 416fr 559fr 390fr" $height={551}>
            <KpiPanel
              items={[
                ["First Order Date", "05/01/2014"],
                ["Total Sales", "678,781"],
                ["Average Sales per Order", "484.5"],
                ["No. of Customers", "674"],
                ["No. of Orders", "1,401"],
                ["No. of Products", "1,415"],
              ]}
            />
            <MapPanel title="Map Primary Region">
              <EastMap />
            </MapPanel>
            <KpiPanel
              items={[
                ["First Order Date", "06/01/2014"],
                ["Total Sales", "725,458"],
                ["Average Sales per Order", "450.3"],
                ["No. of Customers", "686"],
                ["No. of Orders", "1,611"],
                ["No. of Products", "1,503"],
              ]}
            />
            <MapPanel title="Map Secondary Region">
              <WestMap />
            </MapPanel>
          </Row>
          <Row $columns="486fr 226fr 218fr 513fr 218fr 202fr" $height={672}>
            <SalesPanel
              title="Primary Region Sales"
              rows={primarySales}
              heads={["Sub-Catego..", "Sales", "Min. S..", "Max. S.."]}
              widths={["34%", "22%", "22%", "22%"]}
            />
            <DayPanel title="Primary R-Day wise Sales" days={primaryDays} width={218} ticks={[13, 61, 109, 159, 207]} />
            <Panel>
              <PanelTitle>Primary R-Bar Chart</PanelTitle>
              <BarBody>
                <BarChart width={214} step={115} pitch={20.6} bar={16} lastX={188} lastAnchor="start" titleX={122} />
                <ScrollTrack>
                  <ScrollThumb />
                </ScrollTrack>
              </BarBody>
            </Panel>
            <SalesPanel
              title="Secondary Region Sales"
              rows={secondarySales}
              heads={["Sub-C..", "Sales", "Min. Sa..", "Max. S.."]}
              widths={["33%", "22%", "22%", "23%"]}
              sorted
            />
            <DayPanel title="Secondary R-Day wise Sales" days={secondaryDays} width={210} ticks={[11, 59, 105, 153, 199]} />
            <Panel>
              <PanelTitle>Secondary R-Bar Chart</PanelTitle>
              <BarBody>
                <BarChart width={198} step={92} pitch={22.7} bar={18} lastX={196} lastAnchor="end" titleX={98} />
              </BarBody>
            </Panel>
          </Row>
        </Main>
        <Sidebar>
          <FilterBox id="primary-region" label="Primary Region" value="East" options={regions} bottom={22} />
          <FilterBox id="secondary-region" label="Secondary Region" value="West" options={regions} bottom={16} />
        </Sidebar>
      </Page>
    </>
  );
}
